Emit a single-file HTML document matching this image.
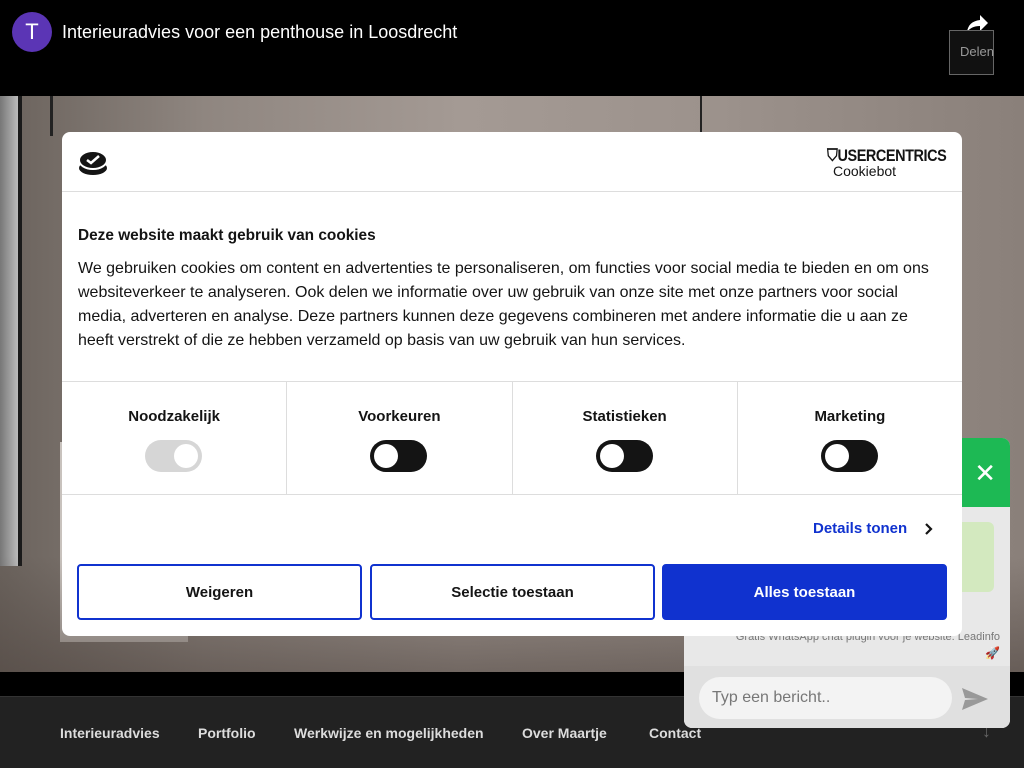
<!DOCTYPE html>
<html><head><meta charset="utf-8">
<style>
*{box-sizing:border-box;margin:0;padding:0}
body{width:1024px;height:768px;overflow:hidden;background:#000;font-family:"Liberation Sans",sans-serif;position:relative}
.top{position:absolute;left:0;top:0;width:1024px;height:96px;background:#000}
.av{position:absolute;left:12px;top:12px;width:40px;height:40px;border-radius:50%;background:#5b35b5;color:#fff;font-size:22px;text-align:center;line-height:40px}
.title{position:absolute;left:62px;top:22px;color:#fff;font-size:18px}
.img{position:absolute;left:0;top:96px;width:1024px;height:576px;background:linear-gradient(90deg,#6a625c 0%,#8f8680 20%,#a49a94 45%,#9c928c 70%,#8a807a 100%);overflow:hidden}
.nav{position:absolute;left:0;top:696px;width:1024px;height:72px;background:#222;border-top:1px solid #333}
.nav span{position:absolute;top:28px;color:#ddd;font-size:14px;font-weight:bold}
.modal{position:absolute;left:62px;top:132px;width:900px;height:504px;background:#fff;border-radius:8px;color:#141414}
.hdr{height:60px;border-bottom:1px solid #ddd;position:relative}
.body{padding:35px 16px 0 16px}
.body h2{font-size:15.4px;font-weight:bold;margin-bottom:12px}
.body p{font-size:16px;line-height:24px}
.tg{position:absolute;top:249px;left:0;width:900px;height:114px;border-top:1px solid #ddd;border-bottom:1px solid #ddd;display:flex}
.tg div{flex:1;border-right:1px solid #ddd;text-align:center;position:relative}
.tg div:last-child{border-right:none}
.tg b{display:block;margin-top:26px;font-size:15px}
.sw{position:absolute;left:50%;margin-left:-29px;top:58px;width:57px;height:32px;border-radius:16px;background:#141414}
.sw:after{content:"";position:absolute;left:4px;top:4px;width:24px;height:24px;border-radius:50%;background:#fff}
.sw.dis{background:#d6d6d6}
.sw.dis:after{left:29px}
.det{position:absolute;left:751px;top:388px;color:#1032cf;font-weight:bold;font-size:15px}
.btn{position:absolute;top:432px;width:285px;height:56px;border:2px solid #1032cf;border-radius:4px;text-align:center;line-height:54px;font-weight:bold;font-size:15px;color:#141414;background:#fff}
.chat{position:absolute;left:684px;top:438px;width:326px;height:290px;border-radius:8px;background:#e8e8e8;overflow:hidden}
</style></head><body>
<div class="top"><div class="av">T</div><div class="title">Interieuradvies voor een penthouse in Loosdrecht</div>
<svg style="position:absolute;left:966px;top:15px" width="24" height="18" viewBox="0 0 24 18"><path d="M14 0 L22 8 L14 16 V11 C8 11 4 13 1 17 C2 10 6 6 14 5Z" fill="#fff"/></svg>
<div style="position:absolute;left:949px;top:30px;width:45px;height:45px;border:1px solid #666;background:#111"></div>
<div style="position:absolute;left:960px;top:44px;color:#999;font-size:13px">Delen</div></div>
<div class="img">
<div style="position:absolute;left:0;top:0;width:22px;height:470px;background:linear-gradient(90deg,#777,#bbb);border-right:4px solid #1a1a1a"></div>
<div style="position:absolute;left:50px;top:0;width:3px;height:40px;background:#222"></div>
<div style="position:absolute;left:700px;top:0;width:2px;height:40px;background:#222"></div>
<div style="position:absolute;left:60px;top:346px;width:128px;height:200px;background:#c8c2bd"></div>
<div style="position:absolute;left:0;top:460px;width:1024px;height:116px;background:linear-gradient(180deg,rgba(80,70,65,0),rgba(80,70,65,.6))"></div>
</div>
<div class="nav"><span style="left:60px">Interieuradvies</span><span style="left:198px">Portfolio</span><span style="left:294px">Werkwijze en mogelijkheden</span><span style="left:522px">Over Maartje</span><span style="left:649px">Contact</span><span style="left:982px;color:#666;font-weight:normal;font-size:18px;top:24px">↓</span></div>
<div class="chat">
<div style="height:69px;background:#1db954;position:relative"><div style="position:absolute;right:14px;top:20px;color:#fff;font-size:26px">✕</div></div>
<div style="position:absolute;left:160px;top:84px;width:150px;height:70px;background:#d3e9bf;border-radius:6px"></div>
<div style="position:absolute;right:10px;top:193px;font-size:11px;color:#777">Gratis WhatsApp chat plugin voor je website: Leadinfo</div>
<div style="position:absolute;right:10px;top:208px;font-size:12px">🚀</div>
<div style="position:absolute;left:0;top:228px;width:326px;height:62px;background:#e0e0e0"></div>
<div style="position:absolute;left:15px;top:239px;width:253px;height:42px;border-radius:21px;background:#f3f3f3;color:#777;font-size:16px;line-height:42px;padding-left:13px">Typ een bericht..</div>
<svg style="position:absolute;left:278px;top:250px" width="26" height="22" viewBox="0 0 26 22"><path d="M0 0 L26 11 L0 22 L3 12 L16 11 L3 10Z" fill="#999"/></svg>
</div>
<div class="modal">
<div class="hdr">
<svg style="position:absolute;left:16px;top:18px" width="30" height="26" viewBox="0 0 30 26"><ellipse cx="15" cy="18" rx="14" ry="7" fill="#141414"/><ellipse cx="15" cy="10" rx="14" ry="9" fill="#141414" stroke="#fff" stroke-width="2"/><path d="M9 10 L13 13 L21 6" stroke="#fff" stroke-width="2.5" fill="none"/></svg>
<div style="position:absolute;right:16px;top:14px;font-weight:bold;font-size:17px;letter-spacing:-0.5px;transform:scaleX(.85);transform-origin:right">⛉USERCENTRICS</div>
<div style="position:absolute;left:771px;top:31px;font-size:14px">Cookiebot</div>
</div>
<div class="body"><h2>Deze website maakt gebruik van cookies</h2>
<p>We gebruiken cookies om content en advertenties te personaliseren, om functies voor social media te bieden en om ons websiteverkeer te analyseren. Ook delen we informatie over uw gebruik van onze site met onze partners voor social media, adverteren en analyse. Deze partners kunnen deze gegevens combineren met andere informatie die u aan ze heeft verstrekt of die ze hebben verzameld op basis van uw gebruik van hun services.</p></div>
<div class="tg"><div><b>Noodzakelijk</b><span class="sw dis"></span></div><div><b>Voorkeuren</b><span class="sw"></span></div><div><b>Statistieken</b><span class="sw"></span></div><div><b>Marketing</b><span class="sw"></span></div></div>
<div class="det">Details tonen</div>
<svg style="position:absolute;left:862px;top:390px" width="10" height="14" viewBox="0 0 10 14"><path d="M2 2 L7 7 L2 12" stroke="#141414" stroke-width="2.2" fill="none"/></svg>
<div class="btn" style="left:15px">Weigeren</div>
<div class="btn" style="left:308px">Selectie toestaan</div>
<div class="btn" style="left:600px;background:#1032cf;color:#fff">Alles toestaan</div>
</div>
</body></html>
